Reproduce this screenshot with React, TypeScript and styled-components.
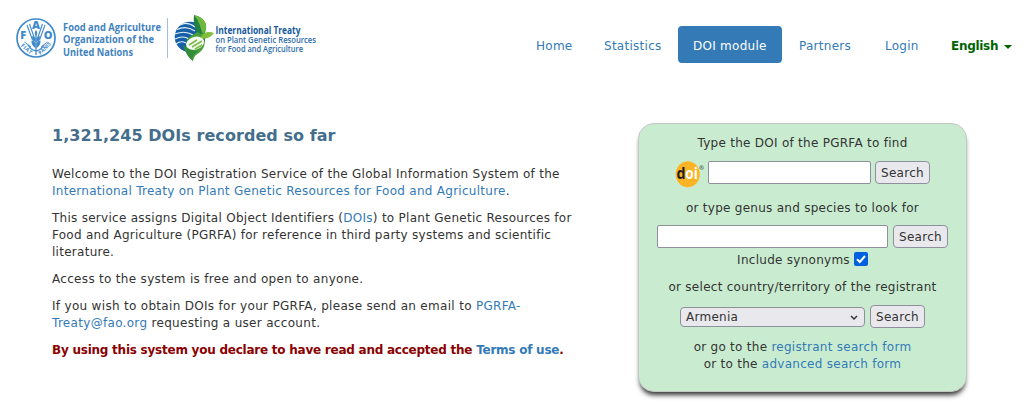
import React from "react";
import styled, { createGlobalStyle } from "styled-components";

const Global = createGlobalStyle`
  *, *::before, *::after { box-sizing: border-box; }
  body {
    margin: 0;
    min-height: 410px;
    background: #fff;
    color: #333;
    font-family: Verdana, "DejaVu Sans", sans-serif;
    font-size: 12px;
    line-height: 17px;
    letter-spacing: 0.27px;
  }
`;

const Header = styled.header`
  display: flex;
  justify-content: space-between;
  align-items: flex-start;
  height: 123px;
  padding: 10px 6px 0 12px;
`;

const Logos = styled.svg`
  display: block;
  width: 310px;
  height: 56px;
  overflow: visible;
  font-family: "Open Sans", sans-serif;
  letter-spacing: 0;
`;

const Nav = styled.nav`
  display: flex;
  gap: 2px;
  padding-top: 16px;
`;

const NavLink = styled.a<{ $active?: boolean; $width: number }>`
  width: ${(p) => p.$width}px;
  height: 37px;
  padding: 12px 15px 8px;
  border-radius: 4px;
  white-space: nowrap;
  text-decoration: none;
  color: ${(p) => (p.$active ? "#fff" : "#337ab7")};
  background: ${(p) => (p.$active ? "#337ab7" : "transparent")};
`;

const Language = styled(NavLink)`
  display: flex;
  align-items: center;
  gap: 6px;
  color: #006400;
  font-weight: bold;
  letter-spacing: -0.3px;
`;

const Caret = styled.span`
  border-top: 4px solid;
  border-left: 4px solid transparent;
  border-right: 4px solid transparent;
`;

const Main = styled.main`
  display: flex;
  justify-content: space-between;
  align-items: flex-start;
  padding: 0 66px 0 52px;
`;

const Intro = styled.section`
  width: 530px;
`;

const Title = styled.h1`
  margin: 3px 0 20px;
  color: #446e8c;
  font-size: 16px;
  line-height: 20px;
  font-weight: bold;
  letter-spacing: 0.06px;
`;

const Paragraph = styled.p<{ $tracking?: number }>`
  margin: 0 0 10px;
  letter-spacing: ${(p) => p.$tracking ?? 0.27}px;
`;

const Declaration = styled(Paragraph)`
  color: #8b0000;
  font-weight: bold;
`;

const Link = styled.a`
  color: #337ab7;
  text-decoration: none;
`;

const Panel = styled.aside`
  width: 329px;
  height: 269px;
  padding: 11px 17px 0;
  border: 1px solid #c4c8c4;
  border-radius: 16px;
  background: #c9ecd0;
  box-shadow: 0 5px 5px -2px #333;
  text-align: center;
`;

const Label = styled.div<{ $top?: number }>`
  margin-top: ${(p) => p.$top ?? 0}px;
  height: 17px;
`;

const FormRow = styled.div<{ $top: number; $gap?: number }>`
  display: flex;
  justify-content: center;
  align-items: center;
  gap: ${(p) => p.$gap ?? 5}px;
  height: 23px;
  margin-top: ${(p) => p.$top}px;
`;

const TextInput = styled.input<{ $width: number }>`
  width: ${(p) => p.$width}px;
  height: 23px;
  padding: 1px 4px;
  border: 1px solid #8f8f9d;
  border-radius: 2px;
  background: #fff;
  font: inherit;
`;

const Button = styled.button`
  width: 55px;
  height: 23px;
  padding: 2px 0 0;
  border: 1px solid #8f8f9d;
  border-radius: 4px;
  background: #e9e9ed;
  color: #333;
  font: inherit;
  letter-spacing: inherit;
`;

const DoiLogo = styled.svg`
  width: 29px;
  height: 28px;
  margin-top: 2px;
  font-family: "Open Sans", sans-serif;
  letter-spacing: 0;
`;

const CheckLabel = styled.label`
  display: flex;
  justify-content: center;
  align-items: center;
  gap: 4px;
  height: 17px;
  margin-top: 4px;
`;

const CheckMark = styled.svg`
  width: 14px;
  height: 14px;
  margin-top: -3px;
`;

const Select = styled.div`
  display: flex;
  justify-content: space-between;
  align-items: center;
  width: 185px;
  height: 20px;
  padding: 2px 6px 0 5px;
  border: 1px solid #8f8f9d;
  border-radius: 4px;
  background: #e9e9ed;
`;

function OrganizationLogos() {
  return (
    <Logos viewBox="0 0 310 56">
      <g fill="none" stroke="#3f8acb">
        <circle cx="24" cy="28" r="19" strokeWidth="1.7" />
        <path d="M24 45V22M24 41Q19 40 16 35M24 41Q29 40 32 35" strokeWidth="1.3" />
        <path d="M15 15L20.5 30M17.5 14L22 27M33 15L27.5 30M30.5 14L26 27" strokeWidth="1.1" />
        <path d="M12.5 32L19 37M35.5 32L29 37" strokeWidth="1" />
      </g>
      <g fill="#3f8acb">
        <path d="M24 20Q21.5 23 24 26Q26.5 23 24 20M23.6 28Q20 24 20 28Q20.5 31 23.6 32ZM24.4 28Q28 24 28 28Q27.5 31 24.4 32ZM23.6 33Q19 28 19.5 32Q20 36 23.6 38ZM24.4 33Q29 28 28.5 32Q28 36 24.4 38Z" />
        <g fontSize="11" fontWeight="800" textAnchor="middle">
          <text x="11.3" y="28.5">F</text>
          <text x="24" y="19">A</text>
          <text x="36.2" y="28.5">O</text>
        </g>
        <g fontSize="5.5" fontWeight="700">
          <text transform="translate(8.5 36) rotate(42)" textLength="13">FIAT</text>
          <text transform="translate(28.5 45) rotate(-45)" textLength="15" lengthAdjust="spacingAndGlyphs">PANIS</text>
        </g>
      </g>
      <g fill="#3f82bf" fontSize="11" fontWeight="700">
        <text x="51" y="20.5" textLength="98" lengthAdjust="spacingAndGlyphs">Food and Agriculture</text>
        <text x="51" y="33.3" textLength="91" lengthAdjust="spacingAndGlyphs">Organization of the</text>
        <text x="51" y="46.1" textLength="70" lengthAdjust="spacingAndGlyphs">United Nations</text>
      </g>
      <path d="M155.5 8V48" stroke="#a8bddc" />
      <circle cx="178" cy="27" r="15.3" fill="#1760a5" />
      <path d="M168 15Q175 11 183 17M165 19.5Q174 15 183 21M163 24Q173 20 181 25M163 29Q171 25 177 29M164 34Q169 30 174 33" fill="none" stroke="#e3f1fa" strokeWidth="1.1" />
      <path d="M182 5C191 7 197 13 193 23C191 28 195 34 190 40C187 44 182 44 181 51C174 45 173 37 175 30C179 24 183 25 186 21C181 17 185 10 182 5Z" fill="#4aa13b" />
      <path d="M182 5C192 7 197 14 192 23C188 20 184 14 182 5Z" fill="#6eb83d" />
      <path d="M182 5Q189 14 190 24Q186 24 184 20Q181 13 182 5Z" fill="#238242" />
      <path d="M189 27Q193 20 202 23Q197 30 190 28Z" fill="#83bd3d" />
      <ellipse cx="183" cy="33.2" rx="9.2" ry="6.3" transform="rotate(-18 183 33)" fill="#f5fbed" />
      <g fill="none" stroke="#79bb4c" strokeWidth="1.5">
        <path d="M177 35L185 30M180 37L190 31M183 39L190 35" />
      </g>
      <path d="M171 35Q174 46 181 51Q179 44 187 41Q177 41 171 35Z" fill="#358d3c" />
      <text x="203.5" y="23.5" fill="#175a9b" fontSize="11" fontWeight="700" textLength="85" lengthAdjust="spacingAndGlyphs">International Treaty</text>
      <g fill="#2d6da8" fontSize="9" fontWeight="600">
        <text x="203.5" y="32.5" textLength="100.5" lengthAdjust="spacingAndGlyphs">on Plant Genetic Resources</text>
        <text x="203.5" y="42.2" textLength="87.5" lengthAdjust="spacingAndGlyphs">for Food and Agriculture</text>
      </g>
    </Logos>
  );
}

export default function App() {
  return (
    <>
      <Global />
      <Header>
        <OrganizationLogos />
        <Nav>
          <NavLink $width={66}>Home</NavLink>
          <NavLink $width={87}>Statistics</NavLink>
          <NavLink $width={104} $active>DOI module</NavLink>
          <NavLink $width={84}>Partners</NavLink>
          <NavLink $width={64}>Login</NavLink>
          <Language $width={91}>English<Caret /></Language>
        </Nav>
      </Header>
      <Main>
        <Intro>
          <Title>1,321,245 DOIs recorded so far</Title>
          <Paragraph>
            Welcome to the DOI Registration Service of the Global Information System of the{" "}
            <Link>International Treaty on Plant Genetic Resources for Food and Agriculture</Link>.
          </Paragraph>
          <Paragraph>
            This service assigns Digital Object Identifiers (<Link>DOIs</Link>) to Plant Genetic
            Resources for Food and Agriculture (PGRFA) for reference in third party systems and
            scientific literature.
          </Paragraph>
          <Paragraph $tracking={0.31}>Access to the system is free and open to anyone.</Paragraph>
          <Paragraph $tracking={0.31}>
            If you wish to obtain DOIs for your PGRFA, please send an email to{" "}
            <Link>PGRFA-Treaty@fao.org</Link> requesting a user account.
          </Paragraph>
          <Declaration $tracking={-0.24}>
            By using this system you declare to have read and accepted the <Link>Terms of use</Link>.
          </Declaration>
        </Intro>
        <Panel>
          <Label>Type the DOI of the PGRFA to find</Label>
          <FormRow $top={9} $gap={4}>
            <DoiLogo viewBox="0 0 29 28">
              <ellipse cx="12.7" cy="14.2" rx="12" ry="13" fill="#fcb425" />
              <text x="1.5" y="18.5" fontSize="15.5" fontWeight="700" fill="#231f20" textLength="9" lengthAdjust="spacingAndGlyphs">d</text>
              <text x="10.3" y="18.5" fontSize="15.5" fontWeight="700" fill="#fff" textLength="12.5" lengthAdjust="spacingAndGlyphs">oi</text>
              <text x="24" y="10" fontSize="6" fontWeight="700" fill="#555">®</text>
            </DoiLogo>
            <TextInput $width={163} />
            <Button>Search</Button>
          </FormRow>
          <Label $top={16}>or type genus and species to look for</Label>
          <FormRow $top={8}>
            <TextInput $width={231} />
            <Button>Search</Button>
          </FormRow>
          <CheckLabel>
            Include synonyms
            <CheckMark viewBox="0 0 14 14">
              <rect width="14" height="14" rx="2" fill="#0060df" />
              <path d="M3 7.2L5.8 10L11 4" fill="none" stroke="#fff" strokeWidth="2" />
            </CheckMark>
          </CheckLabel>
          <Label $top={10}>or select country/territory of the registrant</Label>
          <FormRow $top={9}>
            <Select>
              Armenia
              <svg width="8" height="6" viewBox="0 0 8 6">
                <path d="M1 1L4 4L7 1" fill="none" stroke="#333" strokeWidth="1.5" />
              </svg>
            </Select>
            <Button>Search</Button>
          </FormRow>
          <Label $top={11}>or go to the <Link>registrant search form</Link></Label>
          <Label>or to the <Link>advanced search form</Link></Label>
        </Panel>
      </Main>
    </>
  );
}
